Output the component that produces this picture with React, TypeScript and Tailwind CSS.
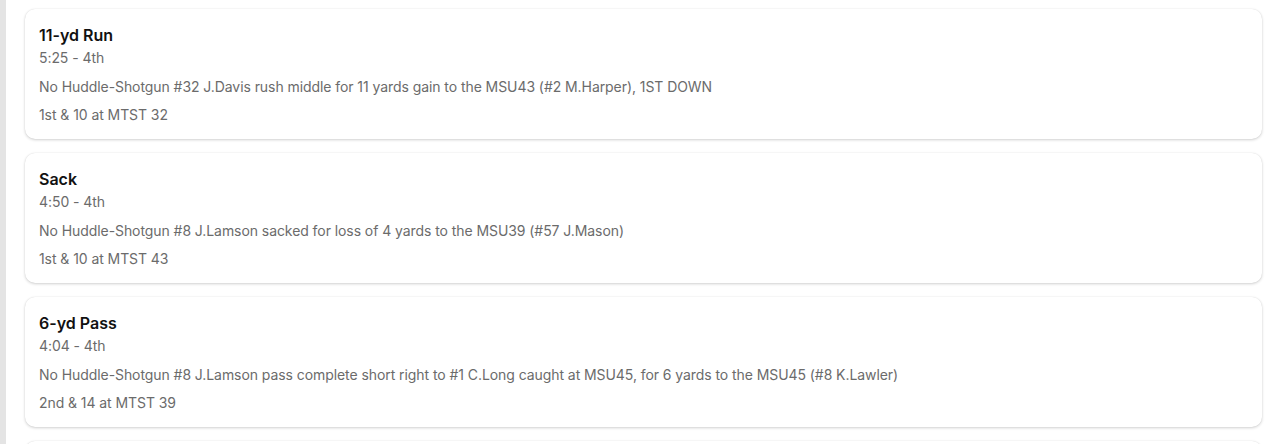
import React from "react";

const plays = [
  {
    title: "11-yd Run",
    time: "5:25 - 4th",
    desc: "No Huddle-Shotgun #32 J.Davis rush middle for 11 yards gain to the MSU43 (#2 M.Harper), 1ST DOWN",
    down: "1st & 10 at MTST 32",
  },
  {
    title: "Sack",
    time: "4:50 - 4th",
    desc: "No Huddle-Shotgun #8 J.Lamson sacked for loss of 4 yards to the MSU39 (#57 J.Mason)",
    down: "1st & 10 at MTST 43",
  },
  {
    title: "6-yd Pass",
    time: "4:04 - 4th",
    desc: "No Huddle-Shotgun #8 J.Lamson pass complete short right to #1 C.Long caught at MSU45, for 6 yards to the MSU45 (#8 K.Lawler)",
    down: "2nd & 14 at MTST 39",
  },
];

export default function App() {
  return (
    <div className="flex h-[444px] w-[1280px] overflow-hidden bg-white" style={{ fontFamily: "Inter, 'Noto Sans', sans-serif" }}>
      <div className="w-[6px] shrink-0 bg-[#e4e4e4]" />
      <div className="flex flex-1 flex-col gap-[14px] pl-[19px] pr-[18px] pt-[9px]">
        {plays.map((p, i) => (
          <div
            key={i}
            className="flex h-[130px] shrink-0 flex-col rounded-[10px] bg-white px-[14px] pt-[15px] shadow-[0_1px_3px_rgba(0,0,0,0.18),0_0_1px_rgba(0,0,0,0.12)]"
          >
            <div className="text-[16px] font-semibold leading-[22px] text-[#111]">{p.title}</div>
            <div className="mt-[2px] text-[14px] leading-[20px] tracking-[-0.07px] text-[#6b6b6b]">{p.time}</div>
            <div className="mt-[9px] text-[14px] leading-[20px] tracking-[-0.07px] text-[#6b6b6b]">{p.desc}</div>
            <div className="mt-[8px] text-[14px] leading-[20px] tracking-[-0.07px] text-[#6b6b6b]">{p.down}</div>
          </div>
        ))}
        <div className="h-[130px] shrink-0 rounded-[10px] bg-white shadow-[0_1px_3px_rgba(0,0,0,0.18),0_0_1px_rgba(0,0,0,0.12)]" />
      </div>
    </div>
  );
}
